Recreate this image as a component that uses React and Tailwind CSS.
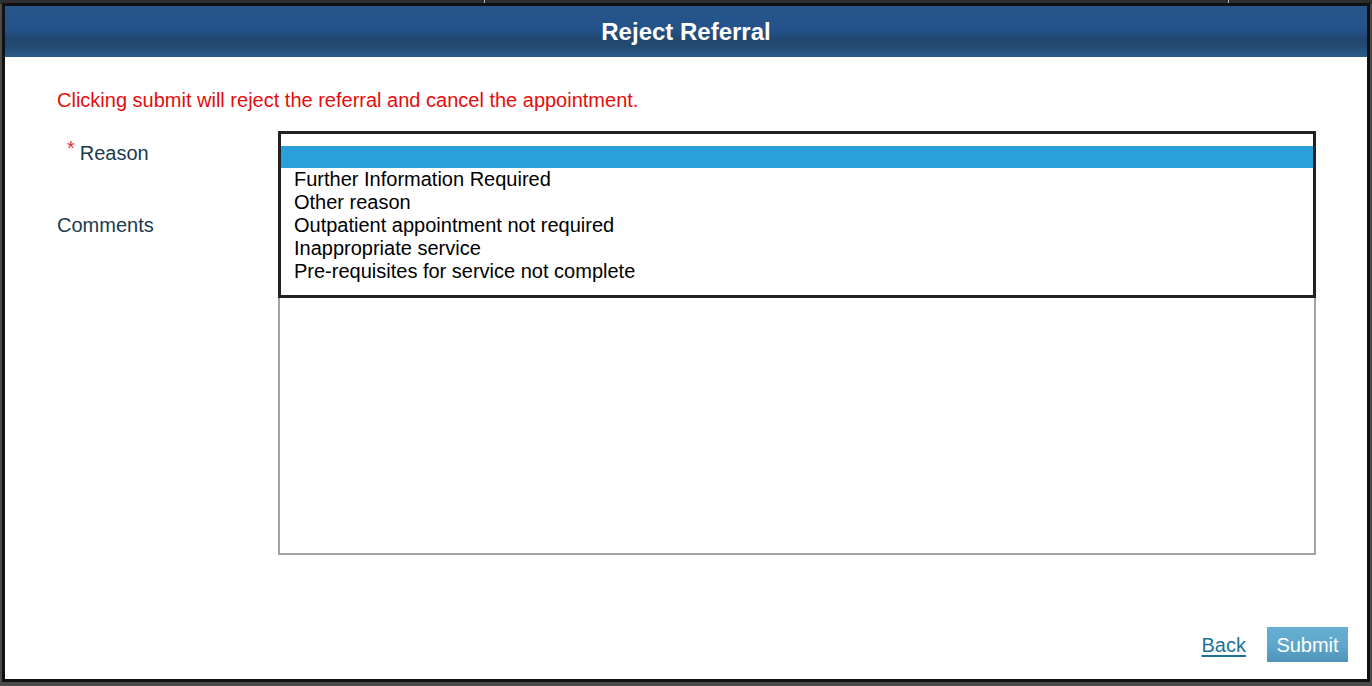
import React from "react";

const reasons = [
  "Further Information Required",
  "Other reason",
  "Outpatient appointment not required",
  "Inappropriate service",
  "Pre-requisites for service not complete",
];

export default function App() {
  return (
    <div className="relative h-[686px] w-[1372px] overflow-hidden bg-[#4a4a4a] font-['Liberation_Sans',Arial,sans-serif]">
      {/* page behind the dialog */}
      <div className="absolute left-0 top-0 h-[4px] w-full bg-[#2e2e2e]">
        <div className="absolute left-[484px] top-0 h-[4px] w-[1px] bg-[#bbb]" />
        <div className="absolute left-[1228px] top-0 h-[4px] w-[1px] bg-[#bbb]" />
      </div>

      <div className="relative ml-[2px] mt-[3px] flex h-[679px] w-[1368px] flex-col border-[3px] border-[#111] bg-white">
        <div className="flex h-[51px] shrink-0 items-center justify-center bg-[linear-gradient(to_bottom,#26568a_0%,#24528a_45%,#21476f_65%,#234a73_80%,#2b5c8d_100%)]">
          <h1 className="text-[24px] font-bold leading-none text-white">Reject Referral</h1>
        </div>

        <div className="flex flex-1 flex-col pl-[52px] pr-[19px]">
          <p className="mt-[32px] text-[20px] leading-[23px] text-[#e60c0c]">
            Clicking submit will reject the referral and cancel the appointment.
          </p>

          <div className="relative mt-[19px]">
            <div className="flex h-[36px]">
              <label className="flex w-[221px] shrink-0 pl-[10px] pt-[11px] text-[20px] leading-[22px] text-[#1b3a4e]">
                <span className="-mt-[3px] mr-[5px] text-[20px] leading-[18px] text-[#e0333f]">*</span>
                Reason
              </label>
              <div className="h-[36px] w-[1038px] border border-[#999]" />
            </div>

            <div className="mt-[46px] flex">
              <label className="w-[221px] shrink-0 pt-[1px] text-[20px] leading-[22px] text-[#1b3a4e]">
                Comments
              </label>
              <textarea className="h-[342px] w-[1038px] resize-none border-2 border-[#a3a3a3] bg-white outline-none" />
            </div>

            {/* open dropdown list */}
            <ul className="absolute left-[221px] top-0 w-[1038px] border-[3px] border-[#222] bg-white py-[12px]">
              <li className="h-[22px] bg-[#2b9fd9]" />
              {reasons.map((r) => (
                <li key={r} className="px-[13px] text-[20px] leading-[23px] text-black">
                  {r}
                </li>
              ))}
            </ul>
          </div>

          <div className="mt-auto mb-[17px] flex items-center justify-end gap-[21px]">
            <a href="#" className="text-[20px] leading-none text-[#1d7298] underline underline-offset-[3px]">
              Back
            </a>
            <button className="h-[35px] w-[81px] bg-[linear-gradient(to_bottom,#67aed2_0%,#5ea6cb_55%,#4f93b8_100%)] text-[20px] text-white">
              Submit
            </button>
          </div>
        </div>
      </div>
    </div>
  );
}
